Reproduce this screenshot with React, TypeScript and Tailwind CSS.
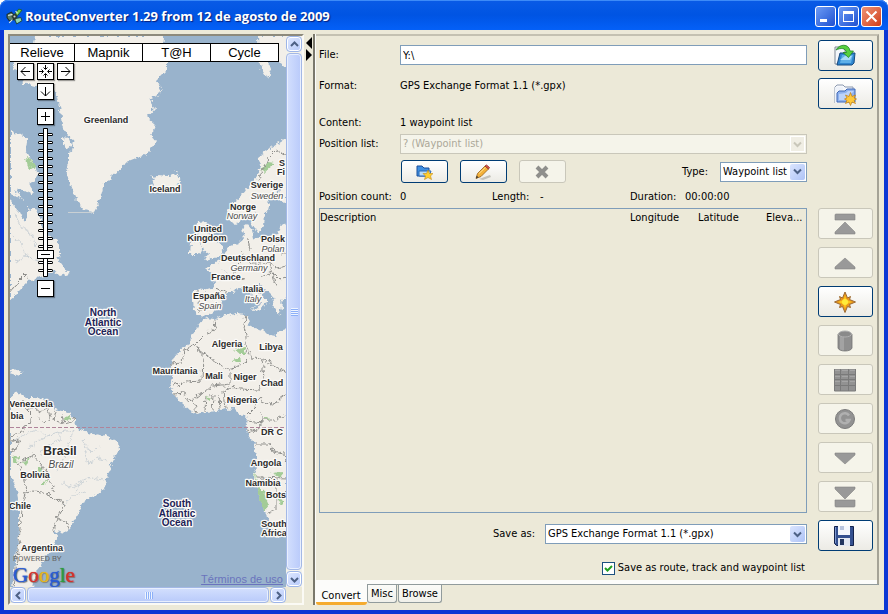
import { useState } from 'react';
import type { ReactNode } from 'react';

const LAND = [
  // Greenland and Ellesmere
  'M34 36 L32 50 L15 61 L13 70 L21 72 L23 83 L35 86 L52 84 L57 97 L60 110 L62 125 L67 135 L73 140 L74 148 L69 152 L69 160 L66 170 L68 178 L73 190 L78 203 L84 210 L94 212 L98 205 L102 192 L104 184 L112 176 L120 170 L125 163 L135 159 L145 155 L152 148 L157 142 L151 135 L156 125 L147 117 L155 108 L149 98 L162 92 L157 80 L167 70 L167 62 L163 50 L164 36 Z',
  'M63 138 L69 139 L72 146 L68 149 L63 145 Z',
  // Canada
  'M10 130 L16 133 L22 135 L27 140 L26 150 L28 156 L34 163 L37 172 L36 180 L30 184 L34 196 L24 190 L18 188 L16 193 L24 199 L10 195 Z',
  'M10 199 L14 206 L20 213 L24 222 L28 216 L28 208 L38 211 L42 225 L48 235 L56 240 L60 246 L60 254 L56 257 L62 264 L69 273 L60 276 L54 271 L45 276 L36 278 L28 282 L20 290 L14 296 L10 299 Z',
  // Iceland
  'M150 174 L155 179 L152 183 L158 175 L168 176 L177 172 L180 181 L178 187 L168 193 L158 191 L150 188 L154 184 Z',
  // Svalbard
  'M258 36 L259 60 L262 70 L267 78 L271 68 L268 60 L276 56 L283 68 L287 66 L287 36 Z',
  // Scandinavia
  'M287 137 L280 142 L272 147 L265 152 L257 158 L262 165 L258 175 L250 185 L242 195 L232 203 L228 210 L230 222 L236 224 L243 220 L250 216 L253 225 L258 233 L264 226 L265 214 L270 206 L268 200 L274 194 L281 188 L279 200 L287 203 Z',
  // Great Britain and Ireland
  'M198 222 L206 221 L205 228 L209 233 L214 241 L223 246 L221 254 L213 258 L204 261 L209 254 L202 248 L201 240 L196 230 Z',
  'M191 243 L199 239 L202 247 L199 254 L190 254 Z',
  // Europe
  'M287 222 L280 226 L278 234 L268 236 L258 239 L253 238 L252 230 L247 224 L242 228 L244 238 L238 243 L230 246 L224 253 L218 262 L206 268 L214 275 L215 287 L205 290 L193 289 L193 300 L194 311 L199 315 L208 316 L217 309 L222 301 L228 293 L236 289 L243 286 L247 291 L254 298 L261 302 L258 309 L250 308 L260 312 L264 304 L269 302 L258 292 L252 285 L257 282 L265 289 L272 296 L274 308 L279 315 L282 308 L281 300 L287 297 Z',
  // Africa
  'M203 320 L207 318 L214 319 L222 316 L236 313 L246 314 L249 320 L248 325 L254 328 L263 330 L270 335 L276 336 L281 330 L287 328 L287 534 L280 537 L272 535 L270 525 L268 517 L264 510 L261 500 L258 490 L254 480 L254 473 L257 465 L257 456 L255 447 L250 438 L246 430 L247 424 L248 418 L240 414 L234 408 L226 409 L218 411 L205 412 L196 414 L190 410 L182 403 L174 395 L170 386 L173 378 L171 366 L174 358 L180 350 L190 343 L192 335 L197 328 Z',
  // South America
  'M10 399 L14 394 L20 393 L26 397 L36 397 L43 398 L50 405 L58 410 L68 412 L75 420 L78 428 L88 432 L100 434 L110 438 L118 442 L119 450 L112 462 L108 475 L105 488 L98 494 L90 498 L82 502 L80 510 L75 518 L70 528 L66 533 L54 531 L57 536 L54 545 L46 556 L42 565 L36 572 L33 588 L12 588 L14 570 L17 550 L19 530 L19 510 L17 490 L10 474 Z',
  // Caribbean
  'M10 371 L18 370 L23 373 L17 375 L10 373 Z',
];

const BORDERS = [
  'M214 319 L215 330 L207 333 L200 340 L194 346 L184 350 L182 363 L171 364',
  'M194 346 L203 354 L202 381 L185 382 L173 386',
  'M194 346 L229 371 L252 358 L246 346 L247 336 L244 326 L246 314',
  'M252 358 L262 359 L287 373',
  'M262 359 L264 378 L259 390 L240 389 L228 387 L224 392 L226 408',
  'M230 371 L230 384 L222 385 L212 386 L204 393 L196 396 L188 400',
  'M205 411 L206 396 L213 394 M212 411 L213 396 M220 410 L219 394',
  'M174 394 L184 393 L188 403 L193 400 L196 413',
  'M247 416 L255 408 L260 396 L262 401 L272 405 L287 394',
  'M248 421 L262 423 L262 414 M247 430 L256 432 L262 420 L275 420 L287 414',
  'M255 444 L270 444 L273 452 L284 454 L287 462',
  'M256 477 L287 478 M276 478 L276 510 L268 513 M277 499 L287 492',
  'M22 402 L26 410 L32 416 L30 424 L24 425 L21 434 L10 436',
  'M26 410 L34 407 L40 412 L48 408 L50 418 L44 423 L38 418',
  'M56 411 L54 420 L64 424 L62 415 M64 424 L72 422 L74 417',
  'M10 452 L18 447 L20 440 L10 441',
  'M16 466 L24 460 L33 455 L40 463 L46 470 L48 480 L54 487 L53 492',
  'M20 466 L24 480 L26 493 L34 491 L41 492 L50 495 L54 499 L62 500 L64 508 L60 512 L56 520 L53 532',
  'M25 493 L22 510 L20 530 L18 550 L14 588',
  'M56 517 L66 522 L69 529',
  'M258 180 L264 168 L268 158 L276 150 L287 156',
  'M242 253 L240 262 L234 268 L236 277 L244 280 M248 240 L250 250 M272 236 L274 248 L282 254 L287 252',
  'M248 262 L260 264 L268 262 L276 268 L287 266 M262 276 L272 272 L280 280 L287 278 M268 262 L272 272 L276 286',
  'M214 288 L226 292 M198 290 L200 312',
  'M10 292 L18 282 L26 274 L30 280',
];

const RIVERS = [
  'M14 440 L26 434 L36 430 L48 436 L60 432 L74 430',
  'M28 448 L36 442 L48 436 M40 456 L46 446 L60 440 L60 432 M56 470 L64 460 L68 446 L74 430',
  'M84 450 L88 464 L98 458 L108 462 M76 492 L80 482 L92 478 L104 480',
  'M64 506 L72 496 L84 492 M62 482 L70 488 L78 484 M82 440 L90 452 L100 446',
  'M14 214 L22 228 L30 232 L36 246 M12 236 L20 242 L28 258 M16 262 L26 256 L40 262',
  'M250 205 L256 212 M246 256 L252 262 L250 272 M222 270 L232 276 M204 296 L214 300',
];

const PARKS = [
  'M26 158 L31 160 L36 165 L34 170 L28 167 Z',
  'M263 167 L268 162 L275 163 L270 167 L264 172 Z',
  'M235 350 L244 347 L248 354 L240 354 Z M232 362 L240 356 L241 361 Z',
  'M253 470 L256 478 L263 490 L269 505 L264 511 L260 498 Z M272 473 L282 472 L281 478 Z M278 500 L284 499 L281 506 Z',
  'M13 456 L18 455 L17 464 L13 462 Z M22 462 L30 458 L26 467 Z M38 468 L44 467 L43 473 L38 471 Z M42 481 L47 480 L46 485 L42 485 Z',
  'M64 418 L69 416 L70 420 L65 421 Z M207 397 L213 399 L208 402 Z M264 418 L270 417 L266 421 Z',
];

interface MapLabel {
  text: string;
  x: number;
  y: number;
  kind?: 'native' | 'ocean' | 'big' | 'bigNative';
}

const LABELS: MapLabel[] = [
  { text: 'Greenland', x: 106, y: 123 },
  { text: 'Iceland', x: 165, y: 192 },
  { text: 'S', x: 282, y: 166 },
  { text: 'Fi', x: 281, y: 175 },
  { text: 'Sverige', x: 267, y: 188 },
  { text: 'Sweden', x: 267, y: 199, kind: 'native' },
  { text: 'Norge', x: 243, y: 210 },
  { text: 'Norway', x: 242, y: 219, kind: 'native' },
  { text: 'United', x: 208, y: 232 },
  { text: 'Kingdom', x: 207, y: 241 },
  { text: 'Polsk', x: 273, y: 242 },
  { text: 'Polan', x: 273, y: 252, kind: 'native' },
  { text: 'Deutschland', x: 248, y: 261 },
  { text: 'Germany', x: 249, y: 271, kind: 'native' },
  { text: 'France', x: 226, y: 280 },
  { text: 'Italia', x: 253, y: 292 },
  { text: 'Italy', x: 253, y: 302, kind: 'native' },
  { text: 'España', x: 209, y: 299 },
  { text: 'Spain', x: 210, y: 309, kind: 'native' },
  { text: 'Algeria', x: 227, y: 347 },
  { text: 'Libya', x: 271, y: 350 },
  { text: 'Mauritania', x: 175, y: 374 },
  { text: 'Mali', x: 214, y: 379 },
  { text: 'Niger', x: 245, y: 380 },
  { text: 'Chad', x: 272, y: 386 },
  { text: 'Nigeria', x: 242, y: 403 },
  { text: 'DR C', x: 272, y: 435 },
  { text: 'Angola', x: 266, y: 466 },
  { text: 'Namibia', x: 263, y: 486 },
  { text: 'Bots', x: 276, y: 498 },
  { text: 'South', x: 274, y: 527 },
  { text: 'Africa', x: 274, y: 536 },
  { text: 'Venezuela', x: 31, y: 407 },
  { text: 'bia', x: 17, y: 419 },
  { text: 'Brasil', x: 60, y: 455, kind: 'big' },
  { text: 'Brazil', x: 61, y: 468, kind: 'bigNative' },
  { text: 'Bolivia', x: 35, y: 478 },
  { text: 'Chile', x: 20, y: 509 },
  { text: 'Argentina', x: 42, y: 551 },
  { text: 'North', x: 103, y: 316, kind: 'ocean' },
  { text: 'Atlantic', x: 103, y: 326, kind: 'ocean' },
  { text: 'Ocean', x: 103, y: 335, kind: 'ocean' },
  { text: 'South', x: 177, y: 507, kind: 'ocean' },
  { text: 'Atlantic', x: 177, y: 517, kind: 'ocean' },
  { text: 'Ocean', x: 177, y: 526, kind: 'ocean' },
];

const LABEL_STYLES = {
  country: 'text-[9px] font-bold fill-[#2b2b2b]',
  native: 'text-[9px] italic fill-[#4a4a4a]',
  ocean: 'text-[10px] font-bold fill-[#1d2357]',
  big: 'text-[12px] font-bold fill-[#2b2b2b]',
  bigNative: 'text-[10px] italic fill-[#4a4a4a]',
};

function WorldMap() {
  return (
    <svg
      className="absolute inset-0 h-full w-full font-['Liberation_Sans',sans-serif]"
      viewBox="10 36 276 551"
      preserveAspectRatio="xMinYMin slice"
      role="img"
      aria-label="Map"
    >
      <defs>
        <filter id="coast" x="0" y="0" width="100%" height="100%" colorInterpolationFilters="sRGB">
          <feTurbulence type="fractalNoise" baseFrequency="0.22" numOctaves="3" seed="4" />
          <feDisplacementMap in="SourceGraphic" scale="7" xChannelSelector="R" yChannelSelector="G" />
        </filter>
      </defs>
      <rect x="10" y="36" width="276" height="551" fill="#99b3cc" />
      <g filter="url(#coast)">
        <rect x="0" y="20" width="300" height="600" fill="#99b3cc" />
        {LAND.map((d) => (
          <path key={d} d={d} fill="#f2efe9" />
        ))}
        {PARKS.map((d) => (
          <path key={d} d={d} fill="#a3cc97" />
        ))}
        {RIVERS.map((d) => (
          <path key={d} d={d} fill="none" stroke="#c3cbd2" strokeWidth="0.8" />
        ))}
        {BORDERS.map((d) => (
          <path key={d} d={d} fill="none" stroke="#8f8f8c" strokeWidth="1" />
        ))}
      </g>
      <path d="M68 212.500 H94" stroke="#c9d0d4" />
      <path d="M10 427.500 H286" stroke="#b0849a" strokeDasharray="4 2" />
      {LABELS.map((label) => (
        <text
          key={`${label.text}-${label.y}`}
          x={label.x}
          y={label.y}
          textAnchor="middle"
          className={LABEL_STYLES[label.kind ?? 'country']}
          stroke="#fbfaf8"
          strokeWidth="2.500"
          strokeLinejoin="round"
          paintOrder="stroke"
        >
          {label.text}
        </text>
      ))}
    </svg>
  );
}

const MAP_BUTTON =
  'flex size-[17px] items-center justify-center border border-black bg-white shadow-[1px_1px_1px_rgba(0,0,0,0.35)]';

function MapButton({ label, d, onClick }: { label: string; d: string; onClick?: () => void }) {
  return (
    <button type="button" aria-label={label} onClick={onClick} className={MAP_BUTTON}>
      <svg width="15" height="15" viewBox="0 0 15 15" fill="none" stroke="#000">
        <path d={d} />
      </svg>
    </button>
  );
}

function ZoomSlider({ value, onChange }: { value: number; onChange: (value: number) => void }) {
  const ticks = Array.from({ length: 18 }, (_, i) => 6 + i * 8);
  const knob = 143 - value * 8;

  return (
    <div className="relative h-[149px] w-[17px]">
      <svg width="18" height="149" viewBox="0 0 18 149">
        {ticks.map((y) => (
          <g key={y}>
            <rect x="1" y={y - 1} width="15" height="3" rx="1.500" fill="#000" />
            <rect x="2" y={y} width="13" height="1" fill="#fff" />
          </g>
        ))}
        <rect x="6" y="0" width="5" height="149" rx="1" fill="#000" />
        <rect x="7" y="1" width="3" height="147" fill="#fff" />
        <rect x="0.500" y={knob - 4.5} width="16" height="8" fill="#fff" stroke="#000" />
        <path d={`M4 ${knob - 0.5} H13`} stroke="#000" />
      </svg>
      <input
        type="range"
        aria-label="Zoom level"
        min={0}
        max={17}
        value={value}
        onChange={(e) => onChange(Number(e.target.value))}
        className="absolute inset-0 h-full w-full cursor-pointer opacity-0 [direction:rtl] [writing-mode:vertical-lr]"
      />
    </div>
  );
}

function MapControls() {
  const [zoom, setZoom] = useState(2);
  const clamp = (value: number) => Math.min(17, Math.max(0, value));

  return (
    <div className="absolute top-[7px] left-0 font-['Liberation_Sans',sans-serif]">
      <div className="flex border-y border-black bg-white">
        {['Relieve', 'Mapnik', 'T@H', 'Cycle'].map((name) => (
          <button
            key={name}
            type="button"
            className="h-[17px] w-[68px] border-r border-black text-[13px] leading-4 text-black first:w-[65px]"
          >
            {name}
          </button>
        ))}
      </div>
      <div className="ml-[7px] flex w-[57px] flex-col items-center pt-px">
        <div className="flex gap-[3px]">
          <MapButton label="Pan left" d="M3 7.500 H12 M7.500 3 L3 7.500 L7.500 12" />
          <MapButton
            label="Return to last result"
            d="M7.500 1 V5 M5.500 3.500 L7.500 5.500 L9.500 3.500 M7.500 14 V10 M5.500 11.500 L7.500 9.500 L9.500 11.500 M1 7.500 H5 M3.500 5.500 L5.500 7.500 L3.500 9.500 M14 7.500 H10 M11.500 5.500 L9.500 7.500 L11.500 9.500"
          />
          <MapButton label="Pan right" d="M3 7.500 H12 M7.500 3 L12 7.500 L7.500 12" />
        </div>
        <div className="mt-[3px]">
          <MapButton label="Pan down" d="M7.500 3 V12 M3 7.500 L7.500 12 L12 7.500" />
        </div>
        <div className="mt-2">
          <MapButton label="Zoom in" d="M7.500 3 V12 M3 7.500 H12" onClick={() => setZoom(clamp(zoom + 1))} />
        </div>
        <div className="my-[3px]">
          <ZoomSlider value={zoom} onChange={setZoom} />
        </div>
        <MapButton label="Zoom out" d="M3 7.500 H12" onClick={() => setZoom(clamp(zoom - 1))} />
      </div>
    </div>
  );
}

function ScrollButton({ label, d }: { label: string; d: string }) {
  return (
    <button
      type="button"
      aria-label={label}
      className="flex size-4 shrink-0 items-center justify-center rounded-sm border border-[#9db5e8] bg-linear-to-br from-[#dfe8ff] to-[#b7cafa] shadow-[inset_0_0_0_1px_#fff]"
    >
      <svg width="9" height="9" viewBox="0 0 9 9" fill="none" stroke="#4d6185" strokeWidth="2">
        <path d={d} />
      </svg>
    </button>
  );
}

function MapPane() {
  return (
    <section className="flex w-[296px] shrink-0 flex-col border-2 border-t-[#8d8a7c] border-r-[#fbfaf5] border-b-[#fbfaf5] border-l-[#8d8a7c]">
      <div className="flex flex-1">
        <div className="relative flex-1 overflow-hidden">
          <WorldMap />
          <MapControls />
          <div className="absolute bottom-0 left-[3px] flex flex-col">
            <span className="font-[Roboto,sans-serif] text-[8px] leading-[8px] text-[#666]">POWERED BY</span>
            <span className="font-['Liberation_Serif',serif] text-[21px] leading-[24px] [text-shadow:0_0_1px_currentColor,1px_1px_1px_#777]">
              <span className="text-[#2a5bd0]">G</span>
              <span className="text-[#d2322d]">o</span>
              <span className="text-[#e3b51c]">o</span>
              <span className="text-[#2a5bd0]">g</span>
              <span className="text-[#2f9a41]">l</span>
              <span className="text-[#d2322d]">e</span>
            </span>
          </div>
          <a
            href="#terms"
            className="absolute right-[3px] bottom-0 font-['Liberation_Sans',sans-serif] text-[11px] leading-4 text-[#6a73bd] underline"
          >
            Términos de uso
          </a>
        </div>
        <div className="flex w-4 flex-col bg-[#f3f2ea]">
          <ScrollButton label="Scroll up" d="M1 6 L4.500 2.500 L8 6" />
          <div className="my-px flex flex-1 flex-col items-center justify-center gap-px rounded-sm border border-[#a3b8e6] bg-linear-to-r from-[#d3dffd] to-[#b9cafa] shadow-[inset_0_0_0_1px_#e8effe]">
            {[0, 1, 2, 3].map((i) => (
              <span key={i} className="h-px w-[7px] bg-[#eef4fe] shadow-[0_1px_0_#8cb0f8]" />
            ))}
          </div>
          <ScrollButton label="Scroll down" d="M1 3 L4.500 6.500 L8 3" />
        </div>
      </div>
      <div className="flex h-4 pr-4">
        <ScrollButton label="Scroll left" d="M6 1 L2.500 4.500 L6 8" />
        <div className="mx-px flex flex-1 items-center justify-center gap-px rounded-sm border border-[#a3b8e6] bg-linear-to-b from-[#d3dffd] to-[#b9cafa] shadow-[inset_0_0_0_1px_#e8effe]">
          {[0, 1, 2, 3].map((i) => (
            <span key={i} className="h-[7px] w-px bg-[#eef4fe] shadow-[1px_0_0_#8cb0f8]" />
          ))}
        </div>
        <ScrollButton label="Scroll right" d="M3 1 L6.500 4.500 L3 8" />
      </div>
    </section>
  );
}

const ICONS: Record<string, ReactNode> = {
  open: (
    <>
      <path d="M2 3 H9 L12 6 V20 H2 Z" fill="#f4f7fb" stroke="#7c8794" />
      <path d="M7 9 H22 L21 19 L19 21 H4 Z" fill="#2f86cf" stroke="#174a80" />
      <path d="M9 11 H20 L18 19 H7 Z" fill="#5fb0e8" />
      <path d="M7 16 L12 12 H19 L17 16 Z" fill="#a9dcf8" />
      <path d="M3 6 C6 0 16 -1 17 7 H20.500 L15.500 13.500 L10 8.500 H13.500 C12.500 4 8 3.500 3 6 Z" fill="#57d03e" stroke="#23842a" strokeWidth="0.8" />
    </>
  ),
  newFile: (
    <>
      <path d="M2 21 V5 L4 3 H10 L12 5 H20 V8" fill="#f6f8fc" stroke="#8b98ae" />
      <path d="M2 21 V5 H10 V21 Z" fill="#eef2f9" />
      <path d="M4 20 V11 L6 9 H12 L14 7 H22 V20 Z" fill="#8fb2ee" stroke="#3e66b4" />
      <path d="M6 18 V12 L13 11 L15 9 H21 L12 18 Z" fill="#bcd3fa" />
      <path d="M17.500 10.500 L19 14.500 L22.500 13 L21 16 L23.500 17 L21 18.500 L22.500 21.500 L19 20 L17.500 23.500 L16 20 L12.500 21.500 L14 18.500 L11.500 17 L14 16 L12.500 13 L16 14.500 Z" fill="#ffc93a" stroke="#c27d12" strokeWidth="0.7" />
    </>
  ),
  top: <path d="M3 2 H21 Q22 2 22 3 V8 H2 V3 Q2 2 3 2 Z M12 10 L22 20 V22 H2 V20 Z" fill="#999" stroke="#858585" strokeWidth="0.6" />,
  up: <path d="M12 7 L22 16 V18 H2 V16 Z" fill="#999" stroke="#858585" strokeWidth="0.6" />,
  star: (
    <>
      <path d="M12 2 L14.500 8 L17.500 6.500 L16.500 9.500 L22.500 12 L16.500 14.500 L17.500 17.500 L14.500 16.500 L12 22.500 L9.500 16.500 L6.500 17.500 L7.500 14.500 L1.500 12 L7.500 9.500 L6.500 6.500 L9.500 8 Z" fill="#e8961c" stroke="#9c6a34" />
      <path d="M12 5 L13.500 10 L19 12 L13.500 14 L12 19 L10.500 14 L5 12 L10.500 10 Z" fill="#ffc818" />
      <circle cx="12" cy="12" r="3" fill="#ffec3a" />
    </>
  ),
  cylinder: (
    <>
      <path d="M5 5 V19 C6 23 18 23 19 19 V5 Z" fill="#8f8f8f" stroke="#747474" strokeWidth="0.8" />
      <path d="M7 7 V20.500 L11 21.500 V8 Z" fill="#a3a3a3" />
      <ellipse cx="12" cy="5" rx="6.500" ry="3" fill="#8a8a8a" stroke="#b0b0b0" />
    </>
  ),
  grid: (
    <>
      <rect x="1" y="1" width="22" height="22" fill="#929292" />
      <path d="M1 6.500 H23 M1 11.500 H23 M1 17.500 H23 M7.500 1 V23 M15.500 1 V23 M1.500 1 V23 H22.500 V1" stroke="#7a7a7a" />
      <path d="M2 2.500 H7 M9 2.500 H15 M17 2.500 H22 M2 8.500 H7 M9 8.500 H15 M17 8.500 H22 M2 13.500 H7 M9 13.500 H15 M17 13.500 H22" stroke="#a5a5a5" />
    </>
  ),
  google: (
    <>
      <circle cx="12" cy="12" r="9.500" fill="#929292" stroke="#7b7b7b" />
      <path d="M16 8.500 A5 5 0 1 0 16.500 13 H12.500" fill="none" stroke="#b0b0b0" strokeWidth="2.500" />
    </>
  ),
  down: <path d="M2 7 H22 V9 L12 18 L2 9 Z" fill="#999" stroke="#858585" strokeWidth="0.6" />,
  bottom: <path d="M2 2 H22 V4 L12 14 L2 4 Z M2 15 H22 V21 Q22 22 21 22 H3 Q2 22 2 21 Z" fill="#999" stroke="#858585" strokeWidth="0.6" />,
  save: (
    <>
      <path d="M1.500 2.500 H20.500 V21.500 H3.500 L1.500 19.500 Z" fill="#34508f" stroke="#14234c" />
      <rect x="5" y="2" width="12" height="9" fill="#f4f7fc" />
      <path d="M7 2 H11 V6 H7 Z" fill="#b8c4dd" />
      <rect x="5" y="14" width="12" height="8" fill="#e2e8f2" />
      <rect x="7" y="15" width="4" height="6" fill="#22365f" />
      <path d="M2.500 3 V19" stroke="#7d97cf" />
    </>
  ),
};

function ToolButton({ icon, label, disabled }: { icon: string; label: string; disabled?: boolean }) {
  return (
    <button
      type="button"
      aria-label={label}
      disabled={disabled}
      className="flex h-[31px] w-[55px] items-center justify-center rounded-[3px] border border-[#003c74] bg-linear-to-b from-white to-[#ecebe5] pr-px disabled:border-[#c9c7ba] disabled:bg-none disabled:bg-[#f5f4ea]"
    >
      <svg width="24" height="24" viewBox="0 0 24 24" fill="none">
        {ICONS[icon]}
      </svg>
    </button>
  );
}

function ListButton({ label, disabled, children }: { label: string; disabled?: boolean; children: ReactNode }) {
  return (
    <button
      type="button"
      aria-label={label}
      disabled={disabled}
      className="flex h-[23px] w-[47px] items-center justify-center rounded-[3px] border border-[#003c74] bg-linear-to-b from-white to-[#ecebe5] pr-0.5 disabled:border-[#c9c7ba] disabled:bg-none disabled:bg-[#f5f4ea]"
    >
      <svg width="18" height="16" viewBox="0 0 18 16" fill="none">
        {children}
      </svg>
    </button>
  );
}

function Combo({ id, options, disabled }: { id: string; options: string[]; disabled?: boolean }) {
  return (
    <div className="relative">
      <select
        id={id}
        disabled={disabled}
        className="block h-5 w-full appearance-none border border-[#7f9db9] bg-white pl-0.5 text-black disabled:border-[#c9c7ba] disabled:bg-[#f5f4ea] disabled:text-[#aca899] disabled:opacity-100"
      >
        {options.map((option) => (
          <option key={option}>{option}</option>
        ))}
      </select>
      <span
        className={
          disabled
            ? 'pointer-events-none absolute top-0.5 right-0.5 flex h-4 w-[15px] items-center justify-center border border-white bg-[#f0eee4] text-[#c9c7ba]'
            : 'pointer-events-none absolute top-0.5 right-0.5 flex h-4 w-[15px] items-center justify-center rounded-xs bg-linear-to-br from-[#dbe5fe] to-[#aec3f6] text-[#4d6185]'
        }
      >
        <svg width="9" height="7" viewBox="0 0 9 7" fill="none" stroke="currentColor" strokeWidth="2">
          <path d="M1 1.500 L4.500 5 L8 1.500" />
        </svg>
      </span>
    </div>
  );
}

function PositionTable() {
  return (
    <div className="mt-[3px] flex-1 border border-[#7f9db9]">
      <table className="w-full table-fixed border-collapse">
        <thead>
          <tr className="h-[18px] text-left">
            <th className="p-0 font-normal">Description</th>
            <th className="w-[68px] p-0 font-normal">Longitude</th>
            <th className="w-[68px] p-0 font-normal">Latitude</th>
            <th className="w-10 p-0 font-normal">Eleva...</th>
          </tr>
        </thead>
        <tbody />
      </table>
    </div>
  );
}

function ConvertPanel() {
  const [file, setFile] = useState('Y:\\');
  const [saveAll, setSaveAll] = useState(true);

  return (
    <div className="flex flex-1 gap-[11px] border-t-2 border-r-2 border-t-[#c4c1b2] border-r-[#a5a396] pr-1 pl-0.5">
      <div className="flex min-w-0 flex-1 flex-col pt-[9px] pb-1 pl-px">
        <div className="grid grid-cols-[81px_1fr] items-center">
          <label htmlFor="file">File:</label>
          <input
            id="file"
            type="text"
            value={file}
            onChange={(e) => setFile(e.target.value)}
            className="h-5 border border-[#7f9db9] bg-white px-0.5 outline-none"
          />
          <span className="mt-[13px]">Format:</span>
          <span className="mt-[13px]">GPS Exchange Format 1.1 (*.gpx)</span>
          <span className="mt-[21px]">Content:</span>
          <span className="mt-[21px]">1 waypoint list</span>
          <label htmlFor="position-list" className="mt-[3px]">
            Position list:
          </label>
          <div className="mt-[3px]">
            <Combo id="position-list" options={['? (Waypoint list)']} disabled />
          </div>
        </div>

        <div className="mt-1.5 flex items-center gap-3 pl-[82px]">
          <ListButton label="New position list">
            <path d="M2 12 V2 H7 L9 4 H14 V12 Z" fill="#3f8fe0" stroke="#1a4f9c" />
            <path d="M4 12 V7 H16 L14 12 Z" fill="#b8dcfb" stroke="#2a68b8" />
            <path d="M13 6 L14.500 9.500 L18 9.500 L15.500 12 L16.500 15.500 L13 13.500 L9.500 15.500 L10.500 12 L8 9.500 L11.500 9.500 Z" fill="#ffce2e" stroke="#c58a14" strokeWidth="0.6" />
          </ListButton>
          <ListButton label="Rename position list">
            <path d="M5 15 L16 11 L17 13 L9 16 Z" fill="#c2c1bb" />
            <path d="M2 14.500 L3.500 9.500 L11 2 L14.500 5 L7 12.500 Z" fill="#f4b13a" stroke="#96601a" strokeWidth="0.8" />
            <path d="M11 2 L12.500 1 L15.500 3.500 L14.500 5 Z" fill="#e0564a" stroke="#8d2c26" strokeWidth="0.8" />
            <path d="M2 14.500 L2.700 11.800 L4.500 13.200 Z" fill="#333" />
            <path d="M5 9.500 L11.500 3.500" stroke="#fde08e" />
          </ListButton>
          <ListButton label="Delete position list" disabled>
            <path d="M4 3 L14 13 M14 3 L4 13" stroke="#8f8f8c" strokeWidth="4" />
          </ListButton>
          <label htmlFor="type" className="ml-auto">
            Type:
          </label>
          <div className="w-[87px]">
            <Combo id="type" options={['Waypoint list', 'Track', 'Route']} />
          </div>
        </div>

        <div className="mt-1.5 grid grid-cols-[81px_92px_48px_1fr_55px_122px]">
          <span>Position count:</span>
          <span>0</span>
          <span>Length:</span>
          <span>-</span>
          <span>Duration:</span>
          <span>00:00:00</span>
        </div>

        <PositionTable />

        <div className="mt-[11px] flex items-center justify-end gap-2.5">
          <label htmlFor="save-format">Save as:</label>
          <div className="w-[262px]">
            <Combo id="save-format" options={['GPS Exchange Format 1.1 (*.gpx)']} />
          </div>
        </div>

        <label className="mt-4 flex items-center justify-end gap-[3px] pr-0.5">
          <span className="relative flex size-[13px] items-center justify-center">
            <input
              type="checkbox"
              checked={saveAll}
              onChange={(e) => setSaveAll(e.target.checked)}
              className="size-[13px] appearance-none border border-[#1c5180] bg-white"
            />
            {saveAll && (
              <svg className="pointer-events-none absolute" width="9" height="9" viewBox="0 0 9 9" fill="none">
                <path d="M1 4 L3.500 6.500 L8 2" stroke="#21a121" strokeWidth="2" />
              </svg>
            )}
          </span>
          Save as route, track and waypoint list
        </label>
      </div>

      <div className="flex flex-col justify-between pt-1 pb-[29px]">
        <div className="flex flex-col gap-[7px]">
          <ToolButton icon="open" label="Open file" />
          <ToolButton icon="newFile" label="New file" />
        </div>
        <div className="flex flex-col gap-2">
          <ToolButton icon="top" label="Move to top" disabled />
          <ToolButton icon="up" label="Move up" disabled />
          <ToolButton icon="star" label="Add position" />
          <ToolButton icon="cylinder" label="Delete position" disabled />
          <ToolButton icon="grid" label="Add elevation" disabled />
          <ToolButton icon="google" label="Add from Google" disabled />
          <ToolButton icon="down" label="Move down" disabled />
          <ToolButton icon="bottom" label="Move to bottom" disabled />
          <ToolButton icon="save" label="Save file" />
        </div>
      </div>
    </div>
  );
}

function TabBar() {
  return (
    <div className="h-[25px]">
      <div className="h-1 border-r-2 border-r-[#a5a396] bg-[#fcfcfa]" />
      <div role="tablist" className="flex items-start border-t border-[#919b9c]">
        <button
          type="button"
          role="tab"
          aria-selected="true"
          className="-mt-px h-[21px] w-[51px] rounded-b-[3px] border-b-[3px] border-[#f5ab2e] bg-[#fcfcfa] pt-1 pr-px"
        >
          Convert
        </button>
        {['Misc', 'Browse'].map((name) => (
          <button
            key={name}
            type="button"
            role="tab"
            aria-selected="false"
            className="mr-px h-[18px] rounded-b-[3px] border border-t-0 border-[#919b9c] bg-linear-to-b from-[#fbfbf8] to-[#f0f0ea] px-[3px]"
          >
            {name}
          </button>
        ))}
      </div>
    </div>
  );
}

function TitleBar() {
  return (
    <header className="flex h-[30px] items-center gap-0.5 rounded-t-lg bg-linear-to-b from-[#0a5be6] via-[#0054e3] to-[#0460f8] pt-0.5 pr-1.5 pl-1.5 shadow-[inset_0_1px_0_#3d8bf8]">
      <svg width="17" height="17" viewBox="0 0 16 16" fill="none">
        <path d="M1 6 L5 4 L8 7 L7 11 L3 12 L1 9 Z" fill="#5d7f6a" stroke="#1d2f2b" />
        <path d="M8 6 L12 1 L15 2 L11 7 Z" fill="#6ecb4c" stroke="#1f5a22" strokeWidth="0.8" />
        <path d="M8 10 L14 9 L15 12 L10 15 Z" fill="#8fd4b2" stroke="#15372a" strokeWidth="0.8" />
        <path d="M2 7 L6 6 M3 14 L6 11 M9 3 L11 5" stroke="#dfe9e2" />
        <path d="M5 8 L9 5 L11 8 L8 12 Z" fill="#2c3a34" />
        <circle cx="8" cy="8" r="1" fill="#c9d8c8" />
      </svg>
      <h1 className="flex-1 truncate font-['Open_Sans',sans-serif] text-[13px] font-bold text-white [text-shadow:1px_1px_1px_#0a1f7a]">
        RouteConverter 1.29 from 12 de agosto de 2009
      </h1>
      <div className="flex gap-0.5">
        <button
          type="button"
          aria-label="Minimize"
          className="flex size-[21px] items-end justify-start rounded-[3px] border border-white bg-linear-to-br from-[#6d9bf5] to-[#1f4fd0] p-1"
        >
          <span className="h-[3px] w-[7px] bg-white" />
        </button>
        <button
          type="button"
          aria-label="Maximize"
          className="flex size-[21px] items-center justify-center rounded-[3px] border border-white bg-linear-to-br from-[#6d9bf5] to-[#1f4fd0]"
        >
          <span className="size-[11px] border border-t-[3px] border-white" />
        </button>
        <button
          type="button"
          aria-label="Close"
          className="flex size-[21px] items-center justify-center rounded-[3px] border border-white bg-linear-to-br from-[#ee9274] to-[#cf3a12]"
        >
          <svg width="13" height="13" viewBox="0 0 13 13" fill="none" stroke="#fff" strokeWidth="2">
            <path d="M1.500 1.500 L11.500 11.500 M11.500 1.500 L1.500 11.500" />
          </svg>
        </button>
      </div>
    </header>
  );
}

export default function App() {
  return (
    <div className="flex min-h-screen flex-col rounded-t-lg bg-[#0a36d4] font-['DejaVu_Sans_Condensed','DejaVu_Sans',sans-serif] text-[11px] leading-4 text-black">
      <TitleBar />
      <div className="mx-1 mb-1 flex flex-1 bg-[#ece9d8] pt-1 pr-[5px] pb-[5px] pl-1">
        <MapPane />
        <div className="flex w-[9px] shrink-0 flex-col items-center pt-[3px]">
          <button type="button" aria-label="Collapse map">
            <svg width="6" height="12" viewBox="0 0 6 12">
              <path d="M6 0 V12 L0 6 Z" fill="#000" />
            </svg>
          </button>
          <button type="button" aria-label="Expand map">
            <svg width="6" height="12" viewBox="0 0 6 12">
              <path d="M0 0 V12 L6 6 Z" fill="#000" />
            </svg>
          </button>
        </div>
        <main className="flex min-w-0 flex-1 border-l-2 border-[#7a786c]">
          <div className="flex min-w-0 flex-1 flex-col border-l border-[#fcfcfa]">
            <ConvertPanel />
            <TabBar />
          </div>
        </main>
      </div>
    </div>
  );
}
